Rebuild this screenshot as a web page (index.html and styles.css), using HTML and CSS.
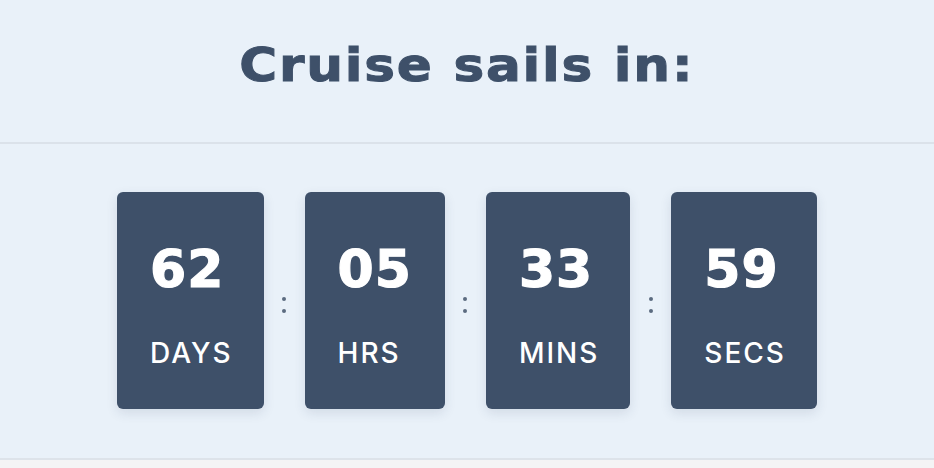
FILE: index.html
```html
<!DOCTYPE html>
<html lang="en">
  <head>
    <meta charset="UTF-8" />
    <meta name="viewport" content="width=device-width, initial-scale=1.0" />
    <title>Cruise Countdown</title>
    <link rel="stylesheet" href="styles.css">
  </head>
  <body>
    <div class="countdown">
      <header class="countdown-header">
        <h1>Cruise sails in:</h1>
      </header>
      <div class="timer">
        <div class="timer-box">
          <span class="timer-value">62</span>
          <span class="timer-label">DAYS</span>
        </div>
        <div class="timer-sep"><i></i><i></i></div>
        <div class="timer-box">
          <span class="timer-value">05</span>
          <span class="timer-label">HRS</span>
        </div>
        <div class="timer-sep"><i></i><i></i></div>
        <div class="timer-box">
          <span class="timer-value">33</span>
          <span class="timer-label">MINS</span>
        </div>
        <div class="timer-sep"><i></i><i></i></div>
        <div class="timer-box">
          <span class="timer-value">59</span>
          <span class="timer-label">SECS</span>
        </div>
      </div>
    </div>
  </body>
</html>
```

FILE: styles.css
```css
body {
  margin: 0;
  background: #f4f4f5;
  font-family: Inter, "Noto Sans", sans-serif;
}

.countdown {
  background: #e9f1f9;
  border-bottom: 2px solid #dde3ea;
}

.countdown-header {
  height: 144px;
  box-sizing: border-box;
  padding-top: 41px;
  text-align: center;
  border-bottom: 2px solid #dbe2ea;
}

.countdown-header h1 {
  display: inline-block;
  margin: 0;
  font-family: "DejaVu Sans", sans-serif;
  font-weight: bold;
  font-size: 47px;
  line-height: 1;
  letter-spacing: 1.6px;
  color: #3e5069;
  -webkit-text-stroke: 1px #3e5069;
  transform: scaleX(1.1);
}

.timer {
  display: flex;
  justify-content: center;
  padding: 48px 0 49px;
}

.timer-box {
  height: 217px;
  box-sizing: border-box;
  padding: 45px 33px 0;
  display: flex;
  flex-direction: column;
  align-items: flex-start;
  background: #3e5069;
  border-radius: 6px;
  box-shadow: 0 4px 12px rgba(40, 60, 90, 0.12);
  color: #fff;
}

.timer-value {
  font-family: "DejaVu Sans", sans-serif;
  font-weight: bold;
  font-size: 52px;
  line-height: 64px;
  letter-spacing: 1px;
  -webkit-text-stroke: 1.2px #fff;
}

.timer-label {
  margin-top: 35px;
  margin-right: -2px;
  font-size: 28px;
  line-height: 34px;
  font-weight: 500;
  letter-spacing: 2px;
}

.timer-sep {
  width: 41px;
  display: flex;
  flex-direction: column;
  justify-content: center;
  align-items: center;
  gap: 8px;
  padding-top: 9px;
}

.timer-sep i {
  width: 4px;
  height: 4px;
  border-radius: 50%;
  background: #5b6b80;
}
```
